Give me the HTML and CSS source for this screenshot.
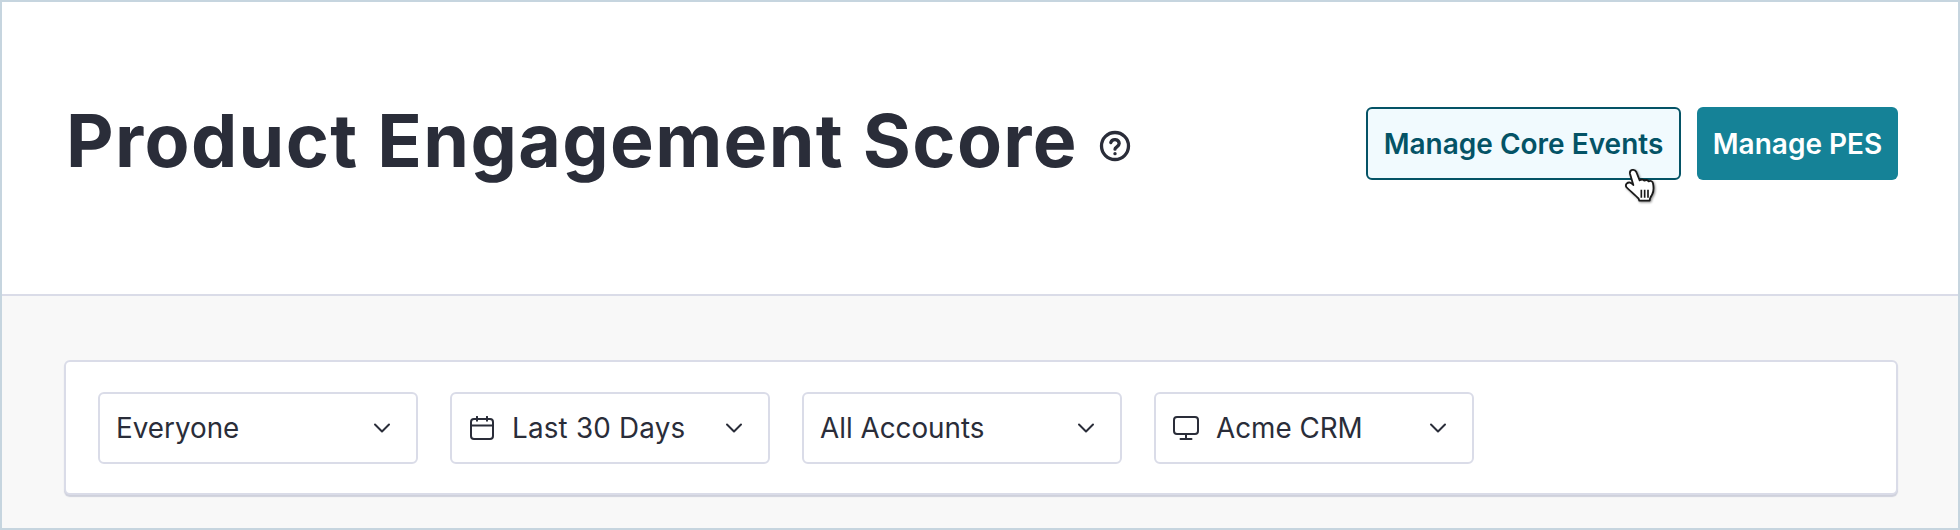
FILE: index.html
```html
<!DOCTYPE html>
<html lang="en">
<head>
<meta charset="utf-8">
<title>Product Engagement Score</title>
<link rel="stylesheet" href="styles.css">
</head>
<body>
<div class="frame">
  <header class="header">
    <div class="title-group">
      <h1 class="title">Product Engagement Score</h1>
      <svg class="help" viewBox="0 0 32 32" fill="none" stroke="#2a2d39" stroke-width="3.3" stroke-linecap="round" stroke-linejoin="round"><circle cx="16" cy="16" r="13.5"/><path d="M11.8 12.6a4.3 4.3 0 0 1 8.4 1c0 2.9-4.2 3.4-4.2 5.6"/><path d="M16 23.6v.1"/></svg>
    </div>
    <div class="actions">
      <button class="btn btn-outline"><span class="btn-text">Manage Core Events</span></button>
      <button class="btn btn-solid"><span class="btn-text">Manage PES</span></button>
      <svg class="cursor" viewBox="0 0 150 150"><path d="M44 74c6-6 14-4 20 4l-10-34c-2-12 14-16 19-5l10 25c6-4 11-3 14 1 5-3 10-2 13 2 6-3 12 0 13 6 2 10 3 22-2 32-2 5-6 9-7 14l-1 6H82l-2-6C70 108 52 94 43 84c-2-4-2-7 1-10z" fill="#fff" stroke="#1a1a1a" stroke-width="5.500" stroke-linejoin="round"/><path d="M88 92v24M98 92v24M108 92v24" stroke="#1a1a1a" stroke-width="5"/></svg>
    </div>
  </header>
  <main class="content">
    <section class="card">
      <div class="select"><span class="label">Everyone</span><svg class="chevron" viewBox="0 0 18 12" fill="none" stroke="#2a2d39" stroke-width="2" stroke-linecap="round" stroke-linejoin="round"><path d="M2 2.500l7 7 7-7"/></svg></div>
      <div class="select"><svg class="icon" viewBox="0 0 24 24" fill="none" stroke="#2a2d39" stroke-width="2" stroke-linecap="round" stroke-linejoin="round"><rect x="1" y="3" width="22" height="20" rx="3"/><path d="M1 9.500h22M7 .8v4M17 .8v4"/></svg><span class="label label-wide">Last 30 Days</span><svg class="chevron" viewBox="0 0 18 12" fill="none" stroke="#2a2d39" stroke-width="2" stroke-linecap="round" stroke-linejoin="round"><path d="M2 2.500l7 7 7-7"/></svg></div>
      <div class="select"><span class="label">All Accounts</span><svg class="chevron" viewBox="0 0 18 12" fill="none" stroke="#2a2d39" stroke-width="2" stroke-linecap="round" stroke-linejoin="round"><path d="M2 2.500l7 7 7-7"/></svg></div>
      <div class="select"><svg class="icon" viewBox="0 0 26 24" fill="none" stroke="#2a2d39" stroke-width="2" stroke-linecap="round" stroke-linejoin="round"><rect x="1" y="1" width="24" height="17" rx="3"/><path d="M13 18v5M7.500 23h11"/></svg><span class="label">Acme CRM</span><svg class="chevron" viewBox="0 0 18 12" fill="none" stroke="#2a2d39" stroke-width="2" stroke-linecap="round" stroke-linejoin="round"><path d="M2 2.500l7 7 7-7"/></svg></div>
    </section>
  </main>
</div>
</body>
</html>
```
FILE: styles.css
```css
* { box-sizing: border-box; }
html, body { margin: 0; padding: 0; }
body { width: 1960px; height: 530px; overflow: hidden; font-family: Inter, "Liberation Sans", sans-serif; color: #2a2d39; }
.frame { width: 1960px; height: 530px; border: 2px solid #c6d5df; display: flex; flex-direction: column; background: #f8f8f8; }
.header { height: 294px; flex: none; background: #fff; border-bottom: 2px solid #dadce8; display: flex; align-items: center; justify-content: space-between; padding: 0 60px 10px 64px; }
.title-group { display: flex; align-items: center; gap: 21px; }
.title { margin: 0 0 5px; font-size: 73.500px; line-height: 90px; font-weight: 650; color: #2a2d39; letter-spacing: 1.350px; }
.help { width: 32px; height: 32px; margin-top: 6px; }
.actions { position: relative; display: flex; gap: 16px; }
.btn { height: 73px; border-radius: 6px; font-family: inherit; font-size: 28px; font-weight: 600; padding: 2px 0 0; }
.btn-outline { width: 315px; background: #f1fafe; border: 2px solid #045366; color: #045366; }
.btn-solid { width: 201px; background: #158297; border: 0; color: #fff; }
.btn-text { display: block; }
.cursor { position: absolute; left: 246px; top: 52px; width: 50px; height: 50px; filter: drop-shadow(1.500px 1.500px 1px rgba(0,0,0,.45)); }
.content { flex: 1; padding: 64px 60px 0 62px; }
.card { height: 135px; background: #fff; border: 2px solid #dadce8; border-radius: 6px; box-shadow: 0 2px 1px #cfd1dc; display: flex; align-items: center; gap: 32px; padding: 0 32px; }
.select { width: 320px; height: 72px; border: 2px solid #dadce8; border-radius: 6px; display: flex; align-items: center; padding: 0 25px 0 16px; font-size: 27.800px; font-weight: 380; color: #2a2d39; }
.label { flex: 1; }
.label-wide { letter-spacing: 0.200px; }
.icon { height: 24px; width: 26px; margin-left: 1px; margin-right: 17px; flex: none; }
.chevron { width: 18px; height: 12px; flex: none; }
```
